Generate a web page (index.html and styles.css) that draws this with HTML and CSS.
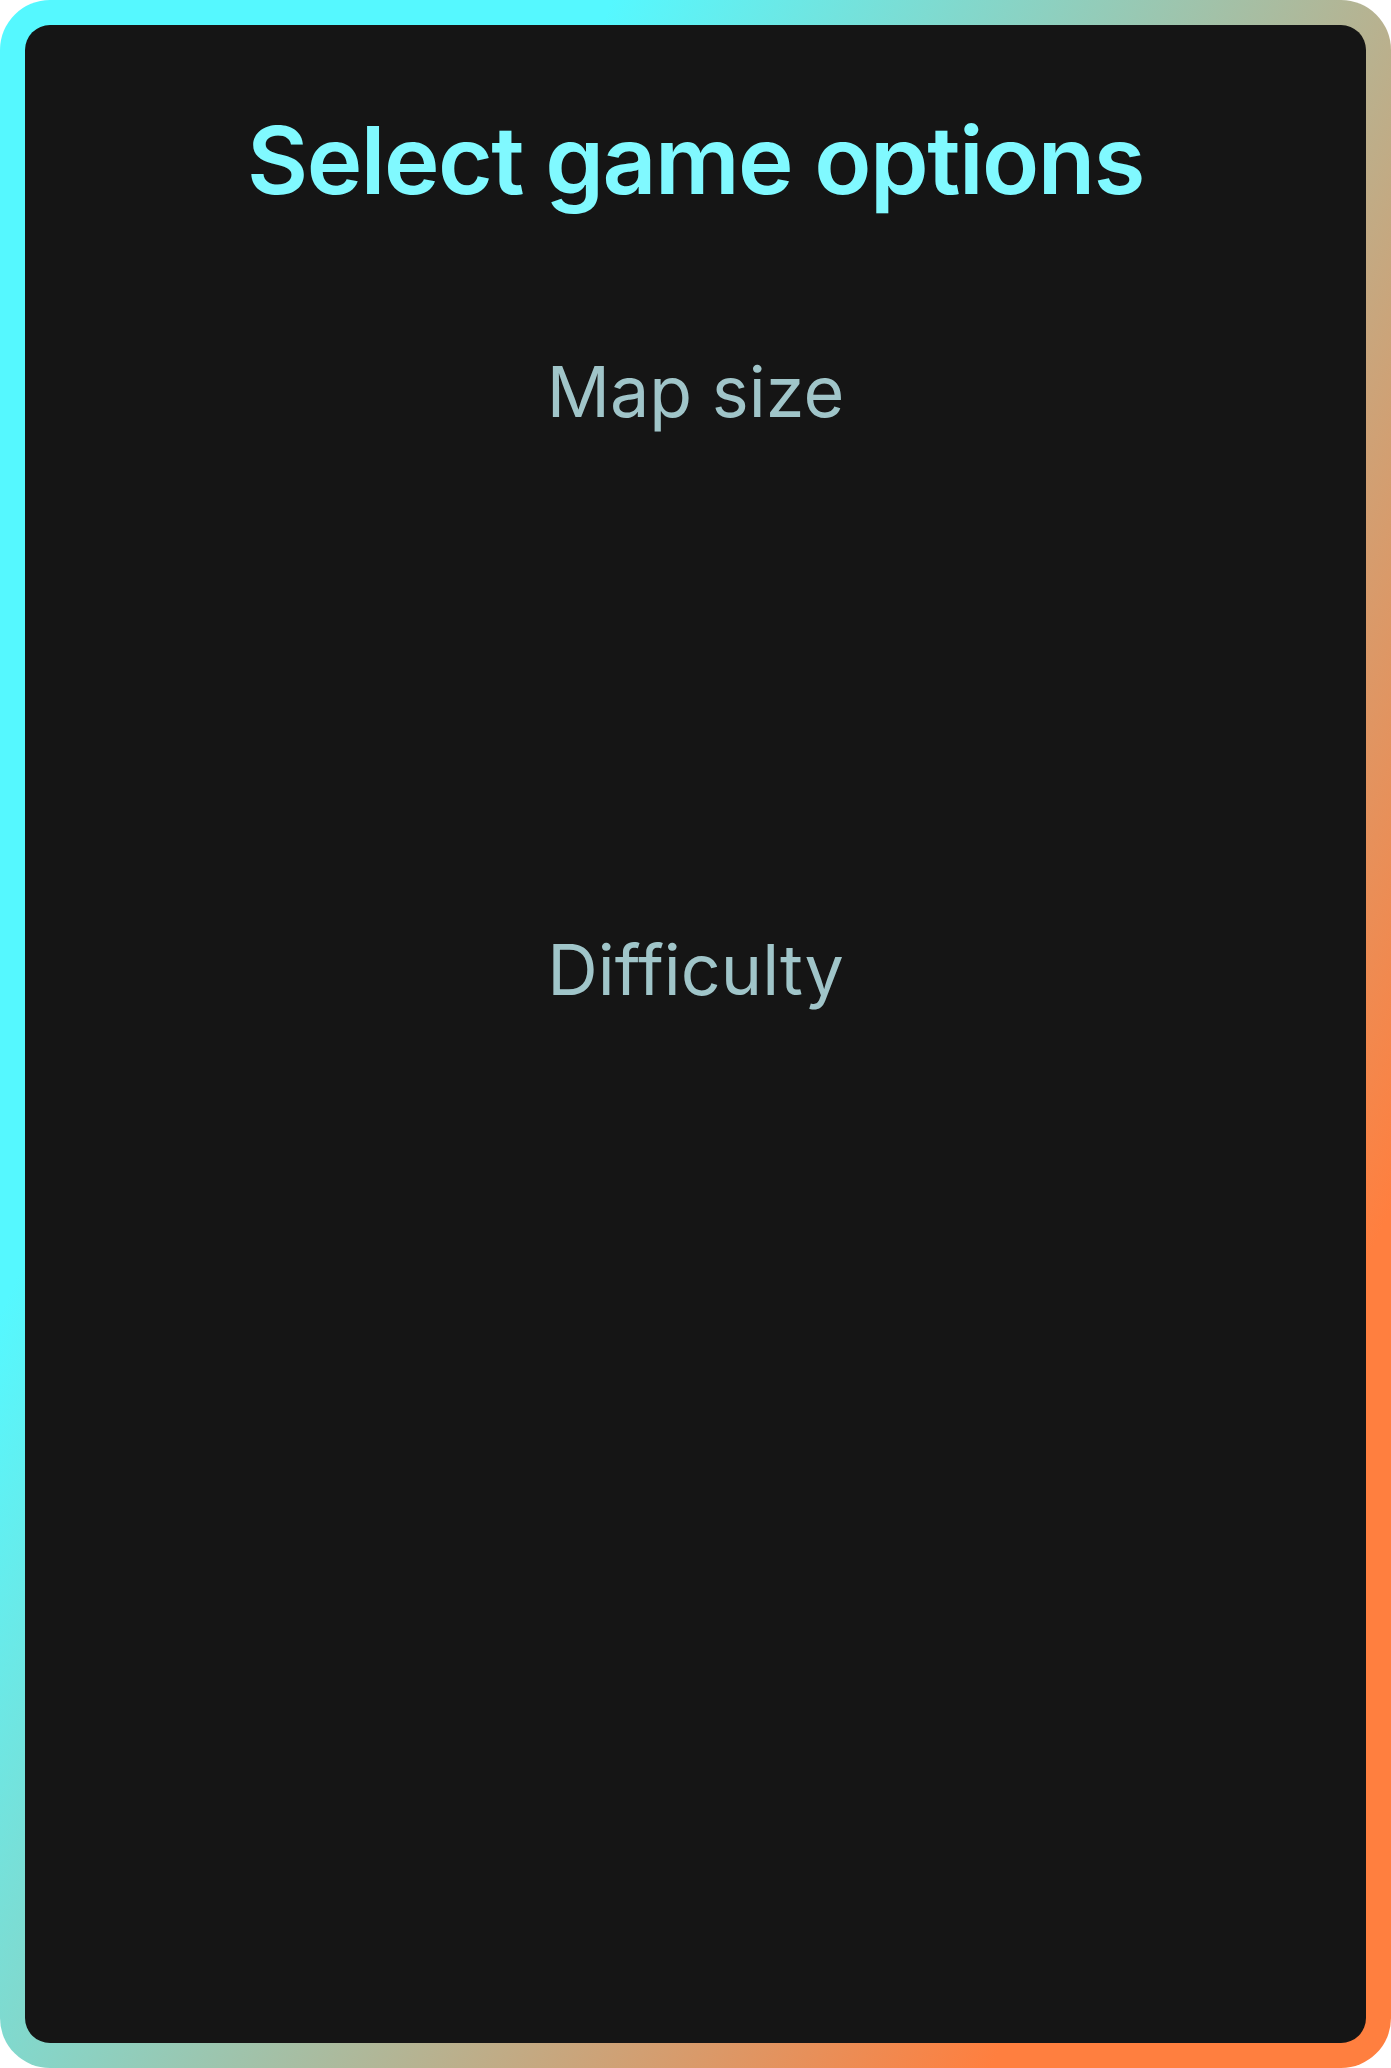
FILE: index.html
```html
<!DOCTYPE html>
<html lang="en">
<head>
<meta charset="utf-8">
<title>Select game options</title>
<link rel="stylesheet" href="styles.css">
</head>
<body>
<div class="frame">
  <main class="panel">
    <h1 class="title">Select game options</h1>
    <section class="option-group">
      <h2 class="label">Map size</h2>
      <div class="choices"></div>
    </section>
    <section class="option-group">
      <h2 class="label">Difficulty</h2>
      <div class="choices"></div>
    </section>
  </main>
</div>
</body>
</html>
```
FILE: styles.css
```css
html, body {
  margin: 0;
  padding: 0;
  background: #ffffff;
}

.frame {
  box-sizing: border-box;
  width: 1391px;
  height: 2068px;
  padding: 25px;
  border-radius: 50px;
  background: linear-gradient(115deg, #55f8ff 26%, #ff7f3f 83%);
}

.panel {
  box-sizing: border-box;
  height: 100%;
  border-radius: 25px;
  background: #151515;
  padding-top: 79px;
  display: flex;
  flex-direction: column;
  align-items: center;
  font-family: Inter, "Noto Sans", "Liberation Sans", sans-serif;
}

.title {
  margin: 0;
  font-size: 94px;
  line-height: 1.2;
  font-weight: 600;
  color: #80f9ff;
  letter-spacing: -1.5px;
}

.option-group {
  margin-top: 133px;
  display: flex;
  flex-direction: column;
  align-items: center;
}

.label {
  margin: 0;
  font-size: 70px;
  line-height: 1.2;
  font-weight: 400;
  color: #a0c5c9;
}

.choices {
  height: 361px;
}
```
